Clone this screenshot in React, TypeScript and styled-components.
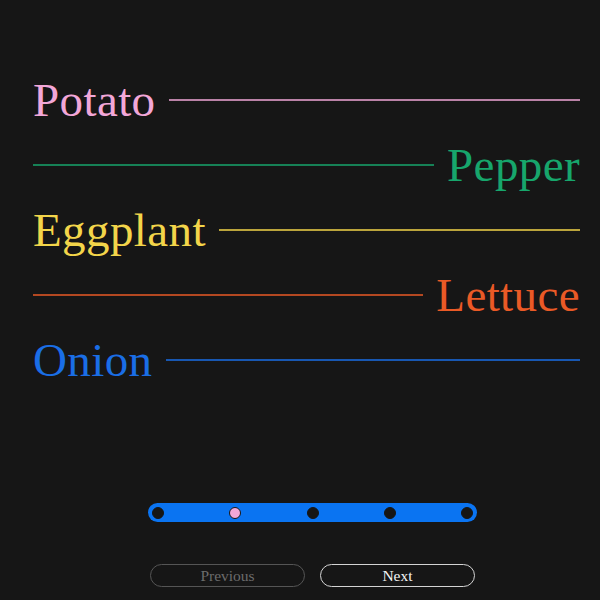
import React, { useState } from 'react';
import styled, { createGlobalStyle } from 'styled-components';

const VEGETABLES = [
  { name: 'Potato', color: '#f2a7d8', align: 'left' },
  { name: 'Pepper', color: '#17a66c', align: 'right' },
  { name: 'Eggplant', color: '#f3d54a', align: 'left' },
  { name: 'Lettuce', color: '#ea5a26', align: 'right' },
  { name: 'Onion', color: '#1a6ee6', align: 'left' },
];

const STEPS = 5;

const GlobalStyle = createGlobalStyle`
  html, body {
    margin: 0;
    padding: 0;
    background: #161616;
  }
  body {
    font-family: 'Liberation Serif', 'DejaVu Serif', serif;
  }
`;

const App = () => {
  const [step, setStep] = useState(1);

  return (
    <Page>
      <GlobalStyle />
      <List>
        {VEGETABLES.map((item) => (
          <Row key={item.name} $reverse={item.align === 'right'}>
            <Label $color={item.color}>{item.name}</Label>
            <Rule $color={item.color} />
          </Row>
        ))}
      </List>
      <Track>
        {Array.from({ length: STEPS }).map((_, idx) => (
          <Dot key={idx} $active={idx === step} onClick={() => setStep(idx)} />
        ))}
      </Track>
      <Buttons>
        <NavButton $muted onClick={() => setStep(Math.max(0, step - 1))}>
          Previous
        </NavButton>
        <NavButton onClick={() => setStep(Math.min(STEPS - 1, step + 1))}>Next</NavButton>
      </Buttons>
    </Page>
  );
};

export default App;

const Page = styled.div`
  width: 600px;
  height: 600px;
  box-sizing: border-box;
  display: flex;
  flex-direction: column;
  align-items: center;
  padding: 67px 0 0 25px;
`;

const List = styled.div`
  align-self: stretch;
  display: flex;
  flex-direction: column;
  margin-left: -25px;
  padding: 0 20px 0 33px;
`;

const Row = styled.div<{ $reverse: boolean }>`
  display: flex;
  flex-direction: ${({ $reverse }) => ($reverse ? 'row-reverse' : 'row')};
  align-items: center;
  gap: 13px;
  height: 65px;
`;

const Label = styled.span<{ $color: string }>`
  color: ${({ $color }) => $color};
  font-size: 47px;
  letter-spacing: 0.4px;
  line-height: 1;
  white-space: nowrap;
  margin-top: 2px;
`;

const Rule = styled.div<{ $color: string }>`
  flex: 1;
  height: 2px;
  opacity: 0.75;
  background-color: ${({ $color }) => $color};
`;

const Track = styled.div`
  margin-top: 111px;
  width: 329px;
  height: 19px;
  box-sizing: border-box;
  padding: 0 4px;
  border-radius: 10px;
  background: #0a74f2;
  display: flex;
  align-items: center;
  justify-content: space-between;
`;

const Dot = styled.button<{ $active: boolean }>`
  width: 12px;
  height: 12px;
  padding: 0;
  border-radius: 50%;
  border: 1.5px solid #161616;
  background: ${({ $active }) => ($active ? '#f2a7d8' : '#161616')};
  cursor: pointer;
`;

const Buttons = styled.div`
  margin-top: 42px;
  display: flex;
  gap: 15px;
`;

const NavButton = styled.button<{ $muted?: boolean }>`
  width: 155px;
  height: 23px;
  border-radius: 12px;
  background: transparent;
  border: 1px solid ${({ $muted }) => ($muted ? '#555555' : '#d4d4d4')};
  color: ${({ $muted }) => ($muted ? '#6c6c6c' : '#f4f4f4')};
  font-family: 'Liberation Serif', 'DejaVu Serif', serif;
  font-size: 15.5px;
  padding: 0;
  cursor: pointer;
`;
